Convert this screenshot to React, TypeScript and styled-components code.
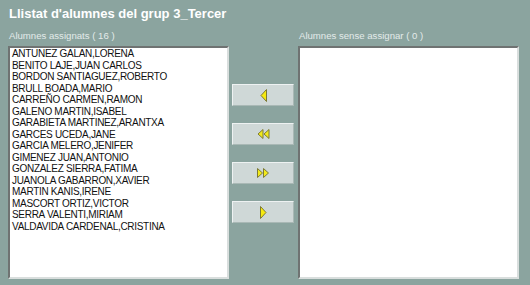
import React from 'react';
import styled, { createGlobalStyle } from 'styled-components';

const GlobalStyle = createGlobalStyle`
  html, body {
    margin: 0;
    padding: 0;
    background: #8ba49f;
  }
  body {
    font-family: "Liberation Sans", Arial, sans-serif;
  }
`;

const Page = styled.div`
  width: 530px;
  height: 285px;
  padding: 6px 8px 0 8px;
  box-sizing: border-box;
  background: #8ba49f;
`;

const Title = styled.h1`
  margin: 0 0 0 1px;
  font-size: 13px;
  line-height: 15px;
  font-weight: bold;
  color: #ffffff;
`;

const Columns = styled.div`
  margin-top: 9px;
  display: grid;
  grid-template-columns: 221px 69px 221px;
  gap: 0;
`;

const Column = styled.div`
  display: flex;
  flex-direction: column;
  gap: 4px;
`;

const Label = styled.div`
  margin-left: 1px;
  font-size: 9.6px;
  line-height: 12px;
  color: #e3ebea;
`;

const ListBox = styled.div<{ $handle?: boolean }>`
  position: relative;
  height: 233px;
  box-sizing: border-box;
  background: #ffffff;
  border-style: solid;
  border-width: 2px;
  border-color: #6f7372 #d9dedd #d9dedd #6f7372;
  padding: 0 2px;
  overflow: hidden;

  ${(p) =>
    p.$handle &&
    `
    &::before {
      content: '';
      position: absolute;
      left: -2px;
      top: 103px;
      width: 2px;
      height: 15px;
      background: #3e4443;
    }
  `}
`;

const Item = styled.div`
  font-size: 10px;
  line-height: 11.5px;
  letter-spacing: -0.3px;
  color: #111111;
  white-space: nowrap;
`;

const Buttons = styled.div`
  display: flex;
  flex-direction: column;
  gap: 17px;
  padding: 54px 0 0 3px;
`;

const MoveButton = styled.button`
  width: 62px;
  height: 22px;
  padding: 0;
  display: flex;
  align-items: center;
  justify-content: center;
  background: #cfd8d7;
  border: 1px solid;
  border-color: #eef2f2 #a9b8b5 #a9b8b5 #eef2f2;
  cursor: pointer;
`;

const Arrow = ({ dir, double }: { dir: 'left' | 'right'; double?: boolean }) => {
  const w = double ? 13 : 7;
  const h = double ? 10 : 13;
  const tri = (x: number, tw: number) =>
    dir === 'left'
      ? `${x + tw},0.5 ${x + tw},${h - 0.5} ${x + 0.5},${h / 2}`
      : `${x},0.5 ${x},${h - 0.5} ${x + tw - 0.5},${h / 2}`;
  return (
    <svg width={w} height={h} viewBox={`0 0 ${w} ${h}`}>
      {double ? (
        <>
          <polygon points={tri(0.5, 5.5)} fill="#f2ea1a" stroke="#7d7a35" strokeWidth="1" />
          <polygon points={tri(6.5, 5.5)} fill="#f2ea1a" stroke="#7d7a35" strokeWidth="1" />
        </>
      ) : (
        <polygon points={tri(0.5, 6)} fill="#f6ea10" stroke="#7d7a35" strokeWidth="1" />
      )}
    </svg>
  );
};

const assigned = [
  'ANTUNEZ GALAN,LORENA',
  'BENITO LAJE,JUAN CARLOS',
  'BORDON SANTIAGUEZ,ROBERTO',
  'BRULL BOADA,MARIO',
  'CARREÑO CARMEN,RAMON',
  'GALENO MARTIN,ISABEL',
  'GARABIETA MARTINEZ,ARANTXA',
  'GARCES UCEDA,JANE',
  'GARCIA MELERO,JENIFER',
  'GIMENEZ JUAN,ANTONIO',
  'GONZALEZ SIERRA,FATIMA',
  'JUANOLA GABARRON,XAVIER',
  'MARTIN KANIS,IRENE',
  'MASCORT ORTIZ,VICTOR',
  'SERRA VALENTI,MIRIAM',
  'VALDAVIDA CARDENAL,CRISTINA',
];

const unassigned: string[] = [];

export default function App() {
  return (
    <>
      <GlobalStyle />
      <Page>
        <Title>Llistat d'alumnes del grup 3_Tercer</Title>
        <Columns>
          <Column>
            <Label>Alumnes assignats ( {assigned.length} )</Label>
            <ListBox>
              {assigned.map((name) => (
                <Item key={name}>{name}</Item>
              ))}
            </ListBox>
          </Column>
          <Buttons>
            <MoveButton title="Assignar">
              <Arrow dir="left" />
            </MoveButton>
            <MoveButton title="Assignar tots">
              <Arrow dir="left" double />
            </MoveButton>
            <MoveButton title="Treure tots">
              <Arrow dir="right" double />
            </MoveButton>
            <MoveButton title="Treure">
              <Arrow dir="right" />
            </MoveButton>
          </Buttons>
          <Column>
            <Label>Alumnes sense assignar ( {unassigned.length} )</Label>
            <ListBox $handle>
              {unassigned.map((name) => (
                <Item key={name}>{name}</Item>
              ))}
            </ListBox>
          </Column>
        </Columns>
      </Page>
    </>
  );
}
